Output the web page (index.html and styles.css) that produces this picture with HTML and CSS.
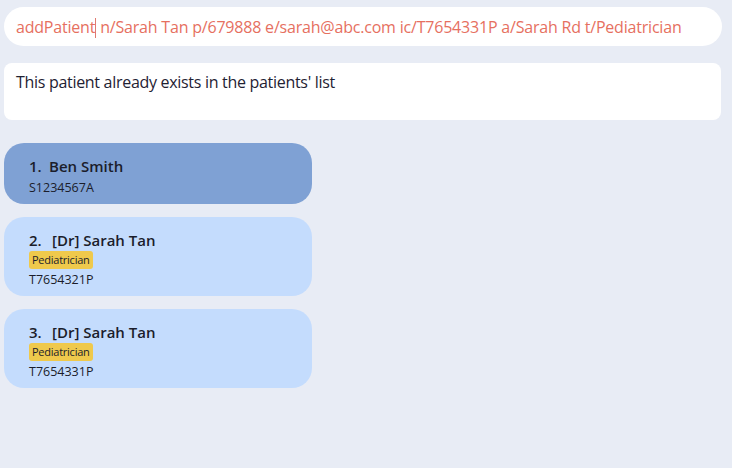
FILE: index.html
```html
<!DOCTYPE html>
<html>
<head>
<meta charset="utf-8">
<link rel="stylesheet" href="styles.css">
</head>
<body>
<div class="app">
  <div class="command"><span class="cmd-text">addPatient<span class="caret"></span> n/Sarah Tan p/679888 e/sarah@abc.com ic/T7654331P a/Sarah Rd t/Pediatrician</span></div>
  <div class="result">This patient already exists in the patients' list</div>
  <div class="list">
    <div class="card selected">
      <div class="name"><span class="idx">1.</span>Ben Smith</div>
      <div class="nric">S1234567A</div>
    </div>
    <div class="card">
      <div class="name"><span class="idx">2.</span><span class="dr">[Dr] Sarah Tan</span></div>
      <div class="tags"><span class="tag">Pediatrician</span></div>
      <div class="nric">T7654321P</div>
    </div>
    <div class="card">
      <div class="name"><span class="idx">3.</span><span class="dr">[Dr] Sarah Tan</span></div>
      <div class="tags"><span class="tag">Pediatrician</span></div>
      <div class="nric">T7654331P</div>
    </div>
  </div>
</div>
</body>
</html>
```
FILE: styles.css
```css
html, body {
  margin: 0;
  padding: 0;
  background: #e8ecf5;
  font-family: "Open Sans", "Noto Sans", sans-serif;
  width: 732px;
  height: 468px;
  overflow: hidden;
}
.app {
  padding: 7px 10px 0 4px;
}
.command {
  background: #ffffff;
  height: 39px;
  border-radius: 20px;
  display: flex;
  align-items: center;
  padding-left: 12px;
  font-size: 16px;
  color: #e6705f;
  white-space: nowrap;
}
.cmd-text {
  letter-spacing: -0.2px;
}
.caret {
  display: inline-block;
  width: 1px;
  height: 20px;
  background: #e07a70;
  vertical-align: -5px;
}
.result {
  margin-top: 17px;
  margin-right: 1px;
  background: #ffffff;
  height: 57px;
  border-radius: 8px;
  box-sizing: border-box;
  padding: 8px 12px;
  font-size: 16px;
  color: #1f2233;
  letter-spacing: -0.3px;
}
.list {
  margin-top: 23px;
  display: flex;
  flex-direction: column;
  gap: 13px;
  width: 308px;
}
.card {
  background: #c4dcfd;
  border-radius: 20px;
  padding: 12px 0 8px 25px;
  color: #1b1d2b;
}
.card.selected {
  background: #7fa1d4;
}
.name {
  font-size: 15px;
  font-weight: 600;
  line-height: 22px;
}
.idx {
  display: inline-block;
  width: 20px;
}
.dr {
  margin-left: 3px;
}
.tags {
  display: flex;
  margin-top: 0;
}
.tag {
  background: #efc94c;
  border-radius: 3px;
  font-size: 11px;
  line-height: 18px;
  padding: 0 3px;
  letter-spacing: -0.25px;
  color: #1b1d2b;
}
.nric {
  font-size: 12.5px;
  line-height: 17px;
  margin-top: 2px;
}
```
